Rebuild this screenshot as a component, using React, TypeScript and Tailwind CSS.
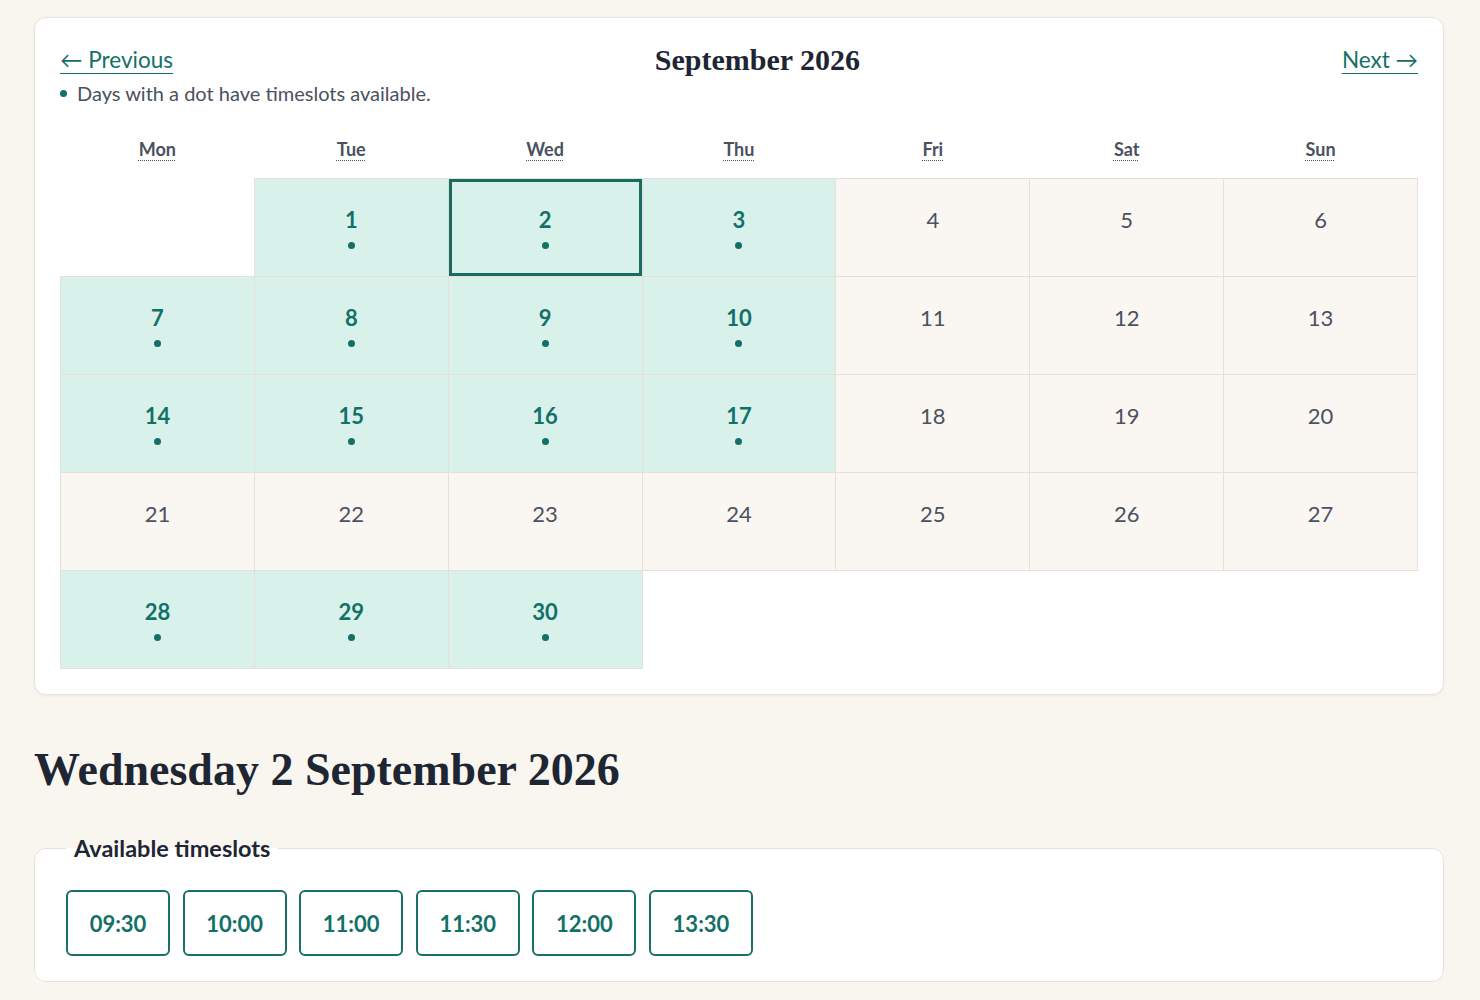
import React from 'react';

const SANS = "font-['Lato','Noto_Sans',sans-serif]";
const SERIF = "font-['Liberation_Serif','DejaVu_Serif',serif]";

type Day = { n: number; available: boolean };

const availableDays = new Set([1, 2, 3, 7, 8, 9, 10, 14, 15, 16, 17, 28, 29, 30]);
const selectedDay = 2;
const weekdays = ['Mon', 'Tue', 'Wed', 'Thu', 'Fri', 'Sat', 'Sun'];
const timeslots = ['09:30', '10:00', '11:00', '11:30', '12:00', '13:30'];

// September 2026 starts on a Tuesday
const buildWeeks = (): (Day | null)[][] => {
  const cells: (Day | null)[] = [null];
  for (let d = 1; d <= 30; d++) cells.push({ n: d, available: availableDays.has(d) });
  while (cells.length % 7 !== 0) cells.push(null);
  const weeks: (Day | null)[][] = [];
  for (let i = 0; i < cells.length; i += 7) weeks.push(cells.slice(i, i + 7));
  return weeks;
};

const DayCell: React.FC<{ day: Day | null }> = ({ day }) => {
  if (!day) return <td className="h-[98px] p-0" />;
  const isSelected = day.n === selectedDay;
  return (
    <td
      className={`h-[98px] p-0 align-top border border-[#e6e1d8] ${
        day.available ? 'bg-[#d9f1eb]' : 'bg-[#faf7f2]'
      } ${isSelected ? 'shadow-[inset_0_0_0_3px_#1a6b62]' : ''}`}
    >
      <div className="flex flex-col items-center pt-[27px]">
        <span
          className={`text-[22px] leading-[28px] ${
            day.available ? 'font-bold text-[#137067]' : 'text-[#4a5160]'
          }`}
        >
          {day.n}
        </span>
        {day.available && <span className="mt-[8px] block h-[7px] w-[7px] rounded-full bg-[#137067]" />}
      </div>
    </td>
  );
};

export default function App() {
  const weeks = buildWeeks();
  return (
    <div className={`min-h-[1000px] bg-[#f9f6f0] pl-[34px] pt-[17px] pb-[16px] ${SANS}`}>
      <div className="w-[1410px] rounded-xl border border-[#e8e4dc] bg-white px-[25px] pt-[26px] pb-[25px] shadow-[0_1px_3px_rgba(0,0,0,0.06)]">
        {/* Month navigation */}
        <div className="flex items-center justify-between">
          <a href="#" className="text-[22.5px] leading-[32px] text-[#137067] underline decoration-1 underline-offset-[5px]">
            ← Previous
          </a>
          <h2 className={`${SERIF} text-[30px] font-bold leading-[32px] text-[#1f2633]`}>September 2026</h2>
          <a href="#" className="text-[22.5px] leading-[32px] text-[#137067] underline decoration-1 underline-offset-[5px]">
            Next →
          </a>
        </div>
        <p className="mt-[3px] flex items-center gap-[10px] text-[20px] leading-[28px] text-[#4a5160]">
          <span className="block h-[7px] w-[7px] rounded-full bg-[#137067]" />
          Days with a dot have timeslots available.
        </p>

        {/* Calendar */}
        <table className="mt-[28px] w-full table-fixed border-collapse">
          <thead>
            <tr>
              {weekdays.map((w) => (
                <th key={w} className="pb-[15px] text-center text-[18px] font-bold leading-[28px] text-[#4a5160]">
                  <abbr className="underline decoration-dotted decoration-1 underline-offset-[4px]" title={w}>
                    {w}
                  </abbr>
                </th>
              ))}
            </tr>
          </thead>
          <tbody>
            {weeks.map((week, i) => (
              <tr key={i}>
                {week.map((day, j) => (
                  <DayCell key={j} day={day} />
                ))}
              </tr>
            ))}
          </tbody>
        </table>
      </div>

      {/* Selected day */}
      <h1 className={`${SERIF} mt-[47px] text-[46px] font-bold leading-[56px] text-[#1f2633]`}>
        Wednesday 2 September 2026
      </h1>

      <fieldset className="mt-[36px] w-[1410px] rounded-xl border border-[#e6e1d8] bg-white pl-[31px] pr-[31px] pb-[25px] pt-[28px]">
        <legend className="px-2 text-[23.5px] font-bold leading-[28px] text-[#1f2633]">Available timeslots</legend>
        <div className="flex gap-[12.6px]">
          {timeslots.map((t) => (
            <button
              key={t}
              type="button"
              className="h-[66px] w-[104px] rounded-md border-2 border-[#1a6f66] bg-white text-[22px] font-bold text-[#137067]"
            >
              {t}
            </button>
          ))}
        </div>
      </fieldset>
    </div>
  );
}
